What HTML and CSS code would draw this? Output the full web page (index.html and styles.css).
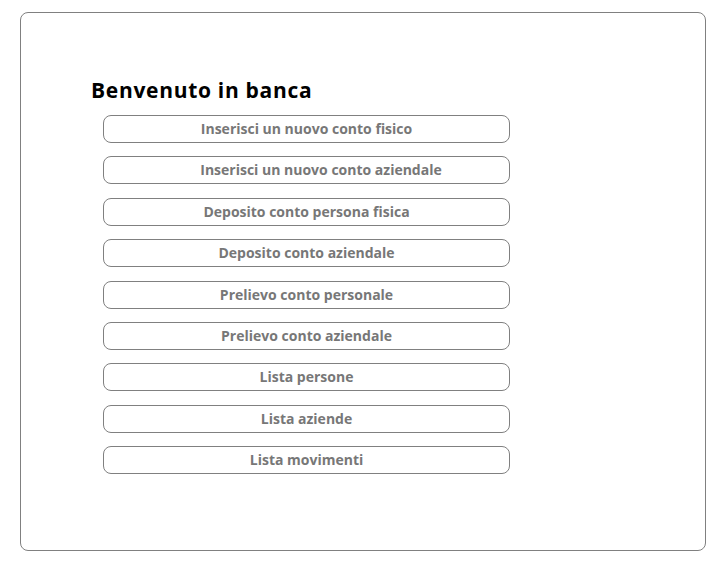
FILE: index.html
```html
<!DOCTYPE html>
<html lang="it">
<head>
<meta charset="utf-8">
<title>Banca</title>
<link rel="stylesheet" href="styles.css">
</head>
<body>
<div class="page">
  <main class="card">
    <h1 class="title">Benvenuto in banca</h1>
    <nav class="menu">
      <button class="btn">Inserisci un nuovo conto fisico</button>
      <button class="btn btn-shift">Inserisci un nuovo conto aziendale</button>
      <button class="btn">Deposito conto persona fisica</button>
      <button class="btn">Deposito conto aziendale</button>
      <button class="btn">Prelievo conto personale</button>
      <button class="btn">Prelievo conto aziendale</button>
      <button class="btn">Lista persone</button>
      <button class="btn">Lista aziende</button>
      <button class="btn">Lista movimenti</button>
    </nav>
  </main>
</div>
</body>
</html>
```
FILE: styles.css
```css
html, body {
  margin: 0;
  padding: 0;
  background: #ffffff;
}
.page {
  padding: 12px 21px 0 20px;
}
.card {
  box-sizing: border-box;
  width: 686px;
  height: 539px;
  border: 1px solid #808080;
  border-radius: 8px;
  padding: 63px 0 0 70px;
}
.title {
  margin: 0 0 11px 0;
  font-family: "Open Sans", sans-serif;
  font-weight: 700;
  font-size: 21px;
  line-height: 28px;
  letter-spacing: 0.7px;
  color: #000;
}
.menu {
  display: flex;
  flex-direction: column;
  gap: 13.4px;
  margin-left: 12px;
  width: 407px;
}
.btn {
  box-sizing: border-box;
  height: 28px;
  width: 100%;
  border: 1px solid #808080;
  border-radius: 8px;
  background: #fff;
  font-family: "Open Sans", sans-serif;
  font-weight: 700;
  font-size: 14px;
  line-height: 26px;
  color: #777777;
  padding: 0 0 1px 0;
}
.btn-shift {
  padding-left: 29px;
}
```
